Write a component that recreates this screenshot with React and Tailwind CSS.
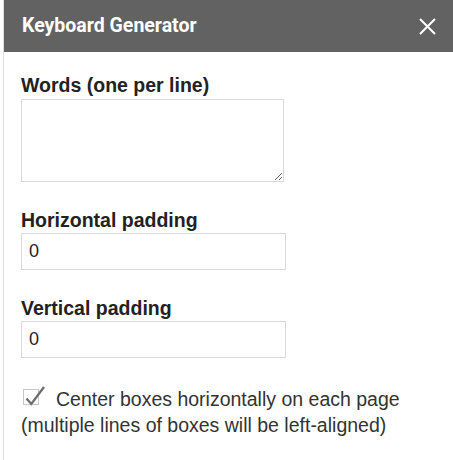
import React from "react";

export default function App() {
  return (
    <div className="w-[453px] h-[460px] bg-white pl-[3px] overflow-hidden">
      <div className="h-full border-l border-[#dcdcdc] flex flex-col">
        <div className="h-[52px] shrink-0 bg-[#626262] flex items-center justify-between pl-[18px] pr-[17px]">
          <span className="text-white text-[19.5px] font-bold font-['Roboto',sans-serif]">Keyboard Generator</span>
          <svg width="17" height="17" viewBox="0 0 17 17" className="block">
            <path d="M1 1 L16 16 M16 1 L1 16" stroke="white" strokeWidth="2" />
          </svg>
        </div>
        <div className="flex flex-col pl-[17px] pt-[22px] font-['Liberation_Sans',Arial,sans-serif] text-[#222]">
          <label className="text-[19.5px] font-bold leading-[22px]">Words (one per line)</label>
          <textarea className="mt-[3px] w-[263px] h-[83px] border border-[#d9d9d9] resize-y outline-none"></textarea>
          <label className="mt-[27px] text-[19.5px] font-bold leading-[22px]">Horizontal padding</label>
          <input type="text" defaultValue="0" className="mt-[2px] w-[265px] h-[37px] border border-[#d9d9d9] px-[7px] text-[18px] outline-none" />
          <label className="mt-[27px] text-[19.5px] font-bold leading-[22px]">Vertical padding</label>
          <input type="text" defaultValue="0" className="mt-[2px] w-[265px] h-[37px] border border-[#d9d9d9] px-[7px] text-[18px] outline-none" />
          <div className="mt-[28px] text-[19.5px] leading-[26px] text-[#333]">
            <span className="inline-block relative w-[16px] h-[16px] border border-[#c6c6c6] align-[1px] ml-[2px] mr-[17px]">
              <svg width="24" height="22" viewBox="0 0 24 22" className="absolute left-[-1px] top-[-4px]">
                <path d="M3.5 12.5 L8.3 18 L21 1" stroke="#6e6e6e" strokeWidth="2.3" fill="none" />
              </svg>
            </span>
            Center boxes horizontally on each page (multiple lines of boxes will be left-aligned)
          </div>
        </div>
      </div>
    </div>
  );
}
